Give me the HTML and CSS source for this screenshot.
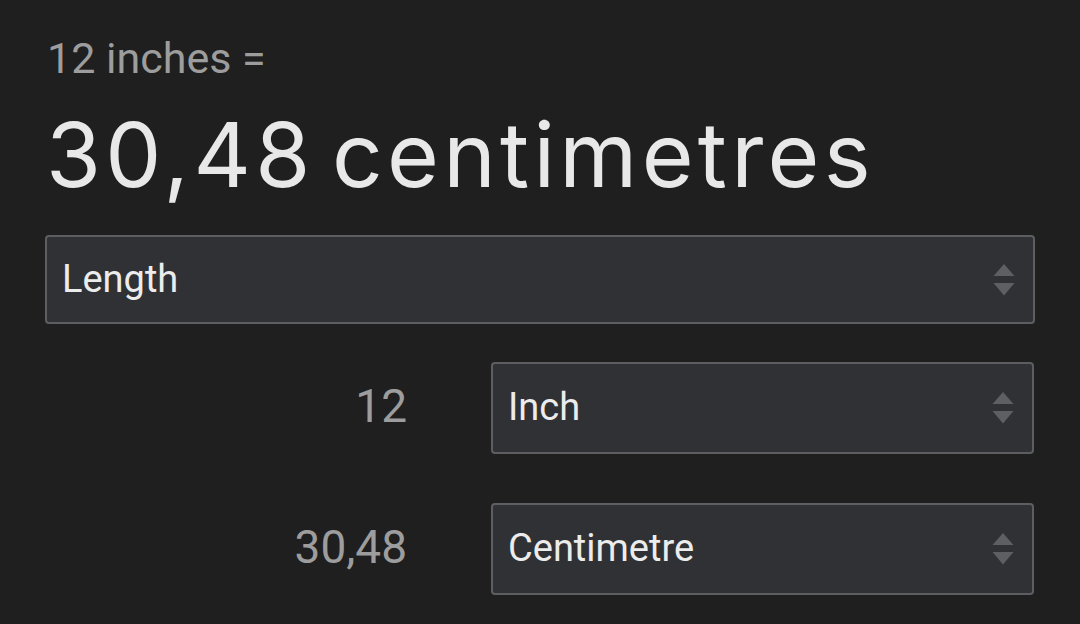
FILE: index.html
```html
<!DOCTYPE html>
<html>
<head>
<meta charset="utf-8">
<link rel="stylesheet" href="styles.css">
</head>
<body>
<div class="wrap">
  <div class="sub">12 inches =</div>
  <div class="big">30,48 centimetres</div>
  <div class="select wide">
    <span class="label">Length</span>
    <svg class="arrows" width="22" height="34" viewBox="0 0 22 34"><path d="M11 1 L21.5 13 L0.5 13 Z M0.5 20 L21.5 20 L11 32.5 Z" fill="#5e5f62"/></svg>
  </div>
  <div class="row">
    <div class="num">12</div>
    <div class="select">
      <span class="label">Inch</span>
      <svg class="arrows" width="22" height="34" viewBox="0 0 22 34"><path d="M11 1 L21.5 13 L0.5 13 Z M0.5 20 L21.5 20 L11 32.5 Z" fill="#5e5f62"/></svg>
    </div>
  </div>
  <div class="row">
    <div class="num">30,48</div>
    <div class="select">
      <span class="label">Centimetre</span>
      <svg class="arrows" width="22" height="34" viewBox="0 0 22 34"><path d="M11 1 L21.5 13 L0.5 13 Z M0.5 20 L21.5 20 L11 32.5 Z" fill="#5e5f62"/></svg>
    </div>
  </div>
</div>
</body>
</html>
```
FILE: styles.css
```css
html, body {
  margin: 0;
  padding: 0;
  background: #1f1f1f;
}
body {
  width: 1080px;
  height: 624px;
  overflow: hidden;
  font-family: Roboto, "Liberation Sans", sans-serif;
}
.wrap {
  padding: 33px 0 0 45px;
  width: 990px;
}
.sub {
  font-size: 43px;
  line-height: 50px;
  color: #9d9d9d;
  padding-left: 2px;
}
.big {
  margin-top: 22px;
  font-family: Inter, Roboto, sans-serif;
  font-size: 89px;
  line-height: 100px;
  color: #e8e8e8;
  letter-spacing: 4.3px;
  word-spacing: -12px;
  padding-left: 1px;
}
.select {
  box-sizing: border-box;
  display: flex;
  align-items: center;
  justify-content: space-between;
  background: #303134;
  border: 2px solid #5d5e61;
  border-radius: 4px;
  color: #ececec;
  font-size: 38px;
  padding: 0 18px 0 15px;
}
.select.wide {
  margin-top: 30px;
  height: 89px;
}
.row {
  display: grid;
  grid-template-columns: 362px 543px;
  column-gap: 84px;
  align-items: center;
  margin-top: 38px;
}
.row + .row {
  margin-top: 49px;
}
.row .select {
  height: 92px;
}
.num {
  text-align: right;
  font-size: 46px;
  color: #9d9d9d;
  padding-bottom: 4px;
}
.label {
  padding-bottom: 2px;
}
.arrows {
  display: block;
}
```
